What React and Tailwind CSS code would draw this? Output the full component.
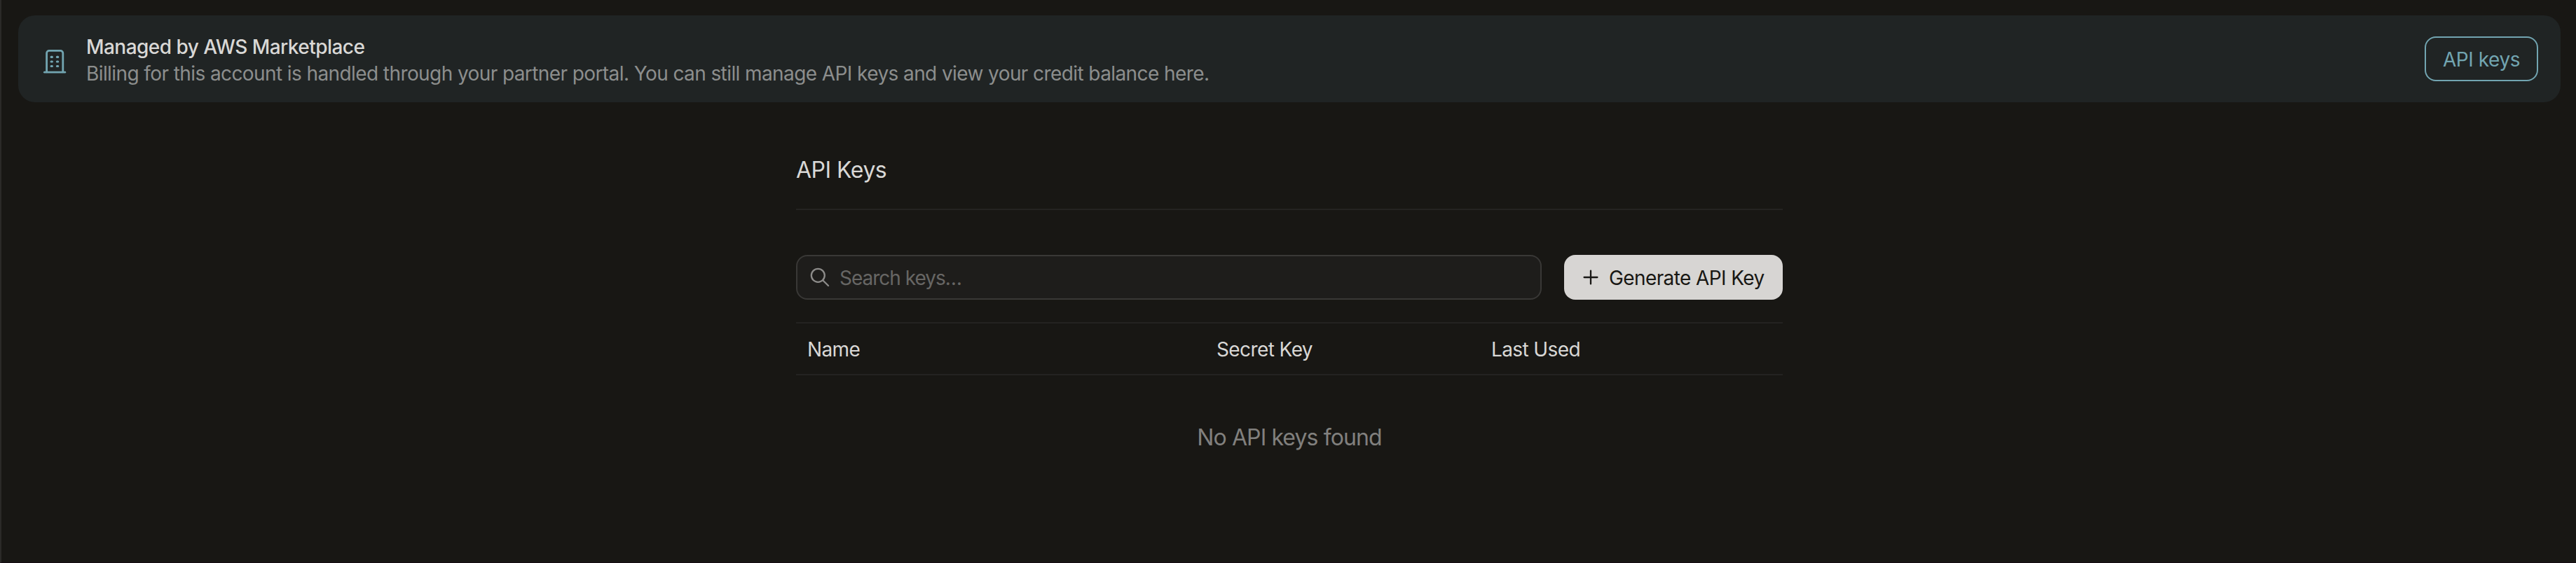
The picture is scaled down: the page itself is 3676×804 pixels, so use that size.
import React, { useState } from 'react';

const COLUMNS = ['Name', 'Secret Key', 'Last Used'];

const BuildingIcon = () => (
  <svg className="h-10 w-10 shrink-0" viewBox="0 0 40 40" fill="none" stroke="currentColor" strokeLinecap="round">
    <path d="M8.6 34.8V7.9a3.5 3.5 0 0 1 3.5-3.5h16.2a3.5 3.5 0 0 1 3.5 3.5v26.9" strokeWidth="2.8" />
    <path d="M5.4 35.2h29.4" strokeWidth="2.8" />
    <path d="M15.1 13.4h1.3M23.4 13.4h1.3M15.1 20h1.3M23.4 20h1.3M15.1 26.5h1.3M23.4 26.5h1.3" strokeWidth="3.1" />
  </svg>
);

const SearchIcon = () => (
  <svg className="h-8 w-8 shrink-0 text-[#8d8c8a]" viewBox="0 0 32 32" fill="none" stroke="currentColor" strokeWidth="2.3">
    <circle cx="13.3" cy="13.3" r="9.5" />
    <path d="M20.2 20.2l7.8 7.8" strokeLinecap="round" />
  </svg>
);

const PlusIcon = () => (
  <svg className="h-7 w-7 shrink-0" viewBox="0 0 28 28" fill="none" stroke="currentColor" strokeWidth="2.3" strokeLinecap="round">
    <path d="M14 4.6v18.8M4.6 14h18.8" />
  </svg>
);

const Banner = () => (
  <div className="mx-[22px] flex h-[124px] items-center rounded-[24px] bg-[#202424] pr-8 pl-8">
    <span className="mt-2 text-[#72a5b1]">
      <BuildingIcon />
    </span>
    <div className="ml-[25px] flex-1 pt-1 text-[28px] leading-[38px]">
      <p className="font-medium tracking-[-0.54px] text-[#d9d8d6]">Managed by AWS Marketplace</p>
      <p className="tracking-[-0.59px] text-[#8c8e8d]">
        Billing for this account is handled through your partner portal. You can still manage API keys and view your credit balance here.
      </p>
    </div>
    <button className="h-16 w-[162px] rounded-[16px] border-2 border-[#72a5b1] pt-0.5 text-[28px] leading-[40px] tracking-[-0.45px] text-[#72a5b1]">
      API keys
    </button>
  </div>
);

const App = () => {
  const [query, setQuery] = useState('');

  return (
    <div className="h-[804px] overflow-hidden border-b border-l-2 border-b-[#150b13] border-l-[#2b2a28] bg-[#181714] pt-[22px] pl-0.5 font-['Inter',sans-serif]">
      <Banner />

      <main className="mx-auto w-[1408px] text-[#d9d8d6]">
        <h1 className="mt-[76px] h-[78px] border-b-2 border-[#242321] text-[32px] leading-[41px] tracking-[-0.5px]">API Keys</h1>

        <div className="mt-16 flex gap-8">
          <label className="flex h-16 flex-1 items-center rounded-[16px] border-2 border-[#393836] bg-[#1e1d1b] pl-4">
            <SearchIcon />
            <input
              className="ml-3 flex-1 bg-transparent pt-0.5 text-[28px] tracking-[-1px] outline-none placeholder:text-[#676664]"
              placeholder="Search keys…"
              value={query}
              onChange={(e) => setQuery(e.target.value)}
            />
          </label>
          <button className="flex h-16 w-[312px] items-center rounded-[16px] bg-[#d7d5d3] pl-6 text-[28px] text-[#181714]">
            <PlusIcon />
            <span className="ml-3 pt-0.5 tracking-[-0.6px] whitespace-nowrap">Generate API Key</span>
          </button>
        </div>

        {/* Keys table */}
        <div className="mt-8 grid h-[76px] grid-cols-[584px_392px_1fr] items-center border-y-2 border-[#242321] text-[28px] tracking-[-0.6px]">
          {COLUMNS.map((column) => (
            <span key={column} className="pt-0.5 pl-4">{column}</span>
          ))}
        </div>
        <p className="mt-[68px] text-center text-[32px] leading-[42px] tracking-[-0.9px] text-[#81807e]">No API keys found</p>
      </main>
    </div>
  );
};

export default App;
